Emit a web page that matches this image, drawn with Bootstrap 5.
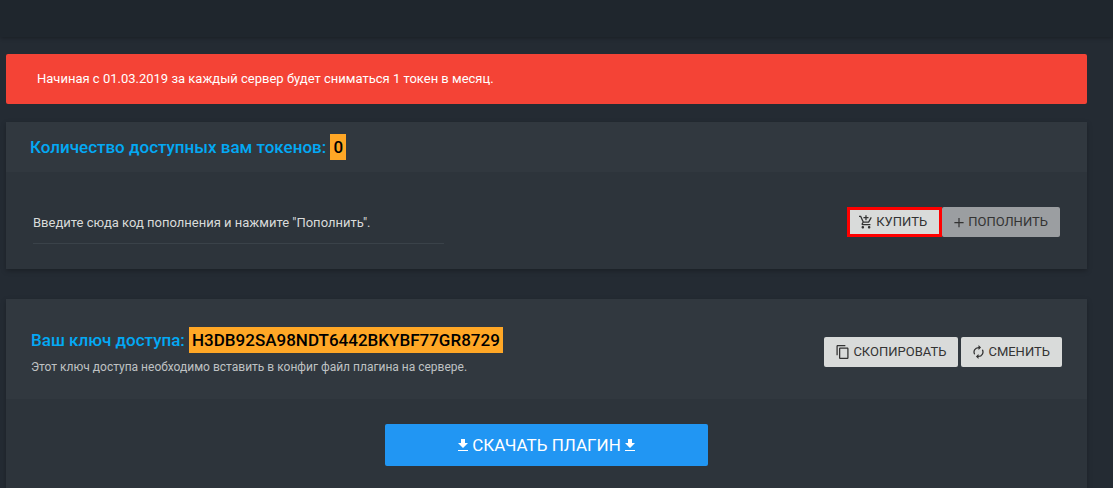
<!DOCTYPE html>
<html lang="ru">
<head>
<meta charset="utf-8">
<meta name="viewport" content="width=device-width, initial-scale=1">
<title>Токены и ключ доступа</title>
<link rel="stylesheet" href="https://cdn.jsdelivr.net/npm/bootstrap@5.3.0/dist/css/bootstrap.min.css">
<style>
body { background: #242b33; color: #d9dbda; font-family: Roboto, sans-serif; font-size: 13px; line-height: 20px; }
.topbar { height: 37px; background: #1f262d; box-shadow: 0 1px 4px rgba(0,0,0,.3); }
.content { padding: 17px 26px 0 6px; }
.notice { background: #f44336; color: #fff; border: 0; border-radius: 2px; padding: 15px 31px; margin-bottom: 18px; }
.panel { background: #2d343b; color: inherit; border: 0; border-radius: 0; box-shadow: 0 2px 5px rgba(0,0,0,.25); }
.panel-head { background: #31383f; padding: 12px 24px; }
.panel-tokens { margin-bottom: 30px; }
.panel-tokens .panel-body { padding: 35px 27px 25px; }
.panel-key .panel-head { padding: 28px 25px 22px; }
.panel-title { color: #03a9f4; font-size: 17px; line-height: 26px; font-weight: 500; margin: 0; }
.token-value { background: #ffa726; color: #000; display: inline-block; padding: 0 3px; }
.hint { font-size: 12px; line-height: 20px; color: #bfc2c3; margin: 4px 0 0; }
.code-field { width: 40%; background: none; border: 0; border-bottom: 1px solid #3a4249; border-radius: 0; color: #d9dbda; font-size: 13px; line-height: 20px; padding: 6px 0 10px; }
.code-field::placeholder { color: #d9dbda; opacity: 1; }
.code-field:focus { background: none; color: #fff; box-shadow: none; }
.tool { background: #d9dbda; color: #333; border: 0; border-radius: 2px; font-size: 13px; line-height: 20px; padding: 5px 12px; gap: 4px; }
.tool svg { width: 13px; height: 14px; fill: currentColor; }
.tool svg.icon-plus { width: 10px; }
.tool svg.icon-refresh { width: 11px; }
.tool:disabled { background: #9b9ea1; color: #333; opacity: 1; }
.tool-buy { border: 3px solid #f00; border-radius: 0; padding: 2px 12px 2px 9px; }
.tool-buy:hover { border-color: #f00; }
.key-tools { gap: 3px; }
.download-row { padding: 25px 2px 22px; }
.download { width: 30%; background: #2196f3; color: #fff; border: 0; border-radius: 2px; font-size: 17px; line-height: 26px; padding: 8px; gap: 4px; }
.download svg { width: 10px; height: 13px; fill: currentColor; }
</style>
</head>
<body class="min-vh-100 d-flex flex-column">
<header class="topbar"></header>
<main class="content flex-grow-1 d-flex flex-column">
  <div class="alert notice" role="alert">Начиная с 01.03.2019 за каждый сервер будет сниматься 1 токен в месяц.</div>

  <section class="card panel panel-tokens">
    <div class="panel-head">
      <h2 class="panel-title">Количество доступных вам токенов: <span class="token-value">0</span></h2>
    </div>
    <form class="panel-body d-flex justify-content-between align-items-start">
      <input class="form-control code-field" type="text" aria-label="Код пополнения" placeholder="Введите сюда код пополнения и нажмите &quot;Пополнить&quot;.">
      <div class="d-flex">
        <button type="button" class="btn tool tool-buy d-flex align-items-center">
          <svg viewBox="1 1 20.500 21.500" aria-hidden="true"><path d="M11 9h2V6h3V4h-3V1h-2v3H8v2h3v3zm-4 9c-1.100 0-2 .9-2 2s.9 2 2 2 2-.9 2-2-.9-2-2-2zm10 0c-1.100 0-2 .9-2 2s.9 2 2 2 2-.9 2-2-.9-2-2-2zM7.200 14.800l.9-1.800h7.500c.7 0 1.400-.4 1.700-1l3.900-7-1.700-1L15.500 11h-7L4.300 2H1v2h2l3.600 7.600L5.200 14c-.7 1.300.3 3 1.800 3h12v-2H7.400z"/></svg>
          КУПИТЬ</button>
        <button type="submit" class="btn tool d-flex align-items-center" disabled>
          <svg class="icon-plus" viewBox="0 0 10 14" aria-hidden="true"><path d="M4.400 3h1.200v4h4v1.200h-4v4H4.400v-4h-4V7h4z"/></svg>
          ПОПОЛНИТЬ</button>
      </div>
    </form>
  </section>

  <section class="card panel panel-key flex-grow-1">
    <div class="panel-head d-flex justify-content-between align-items-center">
      <div>
        <h2 class="panel-title">Ваш ключ доступа: <span class="token-value">H3DB92SA98NDT6442BKYBF77GR8729</span></h2>
        <p class="hint">Этот ключ доступа необходимо вставить в конфиг файл плагина на сервере.</p>
      </div>
      <div class="key-tools d-flex">
        <button type="button" class="btn tool d-flex align-items-center">
          <svg viewBox="2 1 19 22" aria-hidden="true"><path d="M16 1H4C2.900 1 2 1.900 2 3v14h2V3h12zm3 4H8c-1.100 0-2 .9-2 2v14c0 1.100.9 2 2 2h11c1.100 0 2-.9 2-2V7c0-1.100-.9-2-2-2zm0 16H8V7h11z"/></svg>
          СКОПИРОВАТЬ</button>
        <button type="button" class="btn tool d-flex align-items-center">
          <svg class="icon-refresh" viewBox="4 1 16 22" aria-hidden="true"><path d="M12 6v3l4-4-4-4v3a8 8 0 0 0-6.800 12.200l1.500-1.400A6 6 0 0 1 12 6zm6.800 1.800-1.500 1.400A6 6 0 0 1 12 18v-3l-4 4 4 4v-3a8 8 0 0 0 6.800-12.200z"/></svg>
          СМЕНИТЬ</button>
      </div>
    </div>
    <div class="download-row d-flex justify-content-center">
      <button type="button" class="btn download d-flex justify-content-center align-items-center">
        <svg viewBox="0 0 10 13" aria-hidden="true"><path d="M3 0h4v4h3L5 9 0 4h3zM0 11h10v1H0z"/></svg>
        СКАЧАТЬ ПЛАГИН
        <svg viewBox="0 0 10 13" aria-hidden="true"><path d="M3 0h4v4h3L5 9 0 4h3zM0 11h10v1H0z"/></svg>
      </button>
    </div>
  </section>
</main>
<script src="https://cdn.jsdelivr.net/npm/bootstrap@5.3.0/dist/js/bootstrap.bundle.min.js"></script>
</body>
</html>
